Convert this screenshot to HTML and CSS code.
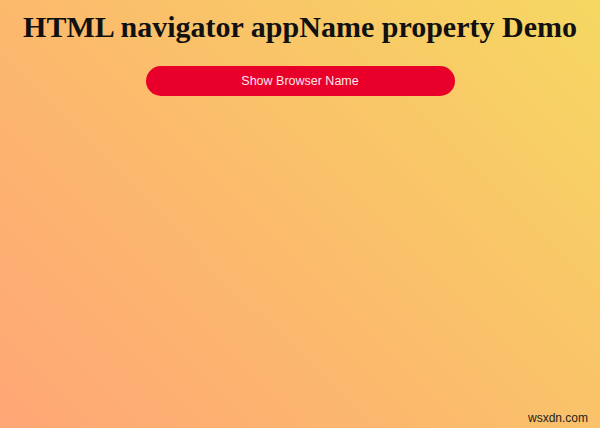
FILE: index.html
```html
<!DOCTYPE html>
<html>
<head>
<meta charset="utf-8">
<link rel="stylesheet" href="styles.css">
</head>
<body>
<main class="page">
  <h1 class="title">HTML navigator appName property Demo</h1>
  <button class="show-btn" type="button">Show Browser Name</button>
</main>
<div class="watermark">wsxdn.com</div>
</body>
</html>
```
FILE: styles.css
```css
html, body {
  margin: 0;
  padding: 0;
  height: 100%;
}
body {
  position: relative;
  overflow: hidden;
  background: linear-gradient(45deg, #ffa676 0%, #fbbb6c 45%, #f6d862 100%);
  font-family: "Liberation Serif", "Times New Roman", serif;
}
.page {
  display: flex;
  flex-direction: column;
  align-items: center;
  padding-top: 8px;
}
.title {
  margin: 0;
  font-size: 30px;
  font-weight: bold;
  color: #111;
  line-height: 37px;
  text-align: center;
}
.show-btn {
  margin-top: 21px;
  width: 309px;
  height: 30px;
  border: none;
  border-radius: 15px;
  background: #e8002b;
  color: #fde6ea;
  font-family: "Liberation Sans", Arial, sans-serif;
  font-size: 12.5px;
  padding: 0;
}
.watermark {
  position: absolute;
  right: 12px;
  bottom: 3px;
  font-family: "Liberation Sans", Arial, sans-serif;
  font-size: 12px;
  color: #222;
}
```
